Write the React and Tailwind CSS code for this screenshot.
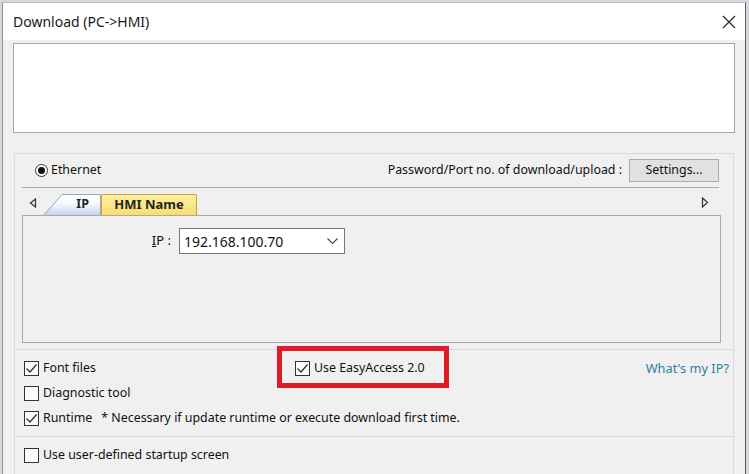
import React from "react";

const font = { fontFamily: '"Noto Sans", "Liberation Sans", sans-serif' };

function CheckBox({ checked }) {
  return (
    <span className="flex h-[15px] w-[15px] shrink-0 items-center justify-center border border-[#333333] bg-[#fbfbfb]">
      {checked && (
        <svg width="13" height="13" viewBox="0 0 13 13">
          <polyline points="1.5,6.5 5,10 11.5,2.5" fill="none" stroke="#333" strokeWidth="1.3" />
        </svg>
      )}
    </span>
  );
}

function Check({ checked, label, className = "" }) {
  return (
    <div className={"flex items-center gap-[4px] " + className}>
      <CheckBox checked={checked} />
      <span className="text-[12.4px] leading-none text-[#111]">{label}</span>
    </div>
  );
}

export default function App() {
  return (
    <div className="h-[474px] w-[749px] overflow-hidden bg-[#d6d8db] pl-[2px] pt-[2px]" style={font}>
      <div className="flex h-[480px] w-[744px] flex-col border-l border-r border-t border-l-[#8e939a] border-r-[#596069] border-t-[#b9bcc0] bg-[#f0f0f0]">
        {/* title bar */}
        <div className="flex h-[37px] shrink-0 items-center justify-between bg-white pl-[10px] pr-[9px]">
          <span className="text-[14px] text-[#1a1a1a]">Download (PC-&gt;HMI)</span>
          <svg width="14" height="14" viewBox="0 0 14 14">
            <path d="M1 1 L13 13 M13 1 L1 13" stroke="#222" strokeWidth="1.1" />
          </svg>
        </div>

        {/* message box */}
        <div className="mx-[10px] mt-[3px] h-[90px] shrink-0 border border-[#a8a8a8] bg-white" />

        <div className="mx-[11px] mt-[20px] flex flex-col border border-[#dadada] divide-y divide-[#dadada]">
          {/* connection group */}
          <div className="flex h-[196px] flex-col">
            <div className="flex h-[33px] items-center pl-[20px] pr-[14px]">
              <span className="flex h-[13px] w-[13px] items-center justify-center rounded-full border border-[#333] bg-white">
                <span className="h-[7px] w-[7px] rounded-full bg-[#111]" />
              </span>
              <span className="ml-[3px] text-[12.4px] text-[#111]">Ethernet</span>
              <span className="ml-auto text-[12.4px] text-[#111]">Password/Port no. of download/upload :</span>
              <button className="ml-[7px] flex h-[23px] w-[90px] items-center justify-center border border-[#adadad] bg-[#e1e1e1] text-[12.4px] text-[#111]">
                Settings...
              </button>
            </div>
            <div className="ml-[7px] mr-[14px] h-px bg-[#aaaaaa]" />

            {/* tab strip */}
            <div className="relative flex h-[27px] items-end pl-[14px] pr-[24px]">
              <svg width="8" height="10" viewBox="0 0 8 10" className="mb-[7px]">
                <path d="M6.5 1 L1.5 5 L6.5 9 Z" fill="none" stroke="#333" strokeWidth="1.2" />
              </svg>
              <div className="relative ml-[7px] flex h-[21px] w-[57px] items-center justify-end pr-[12px]">
                <svg className="absolute inset-0" width="57" height="21" viewBox="0 0 57 21">
                  <defs>
                    <linearGradient id="ipg" x1="0" y1="0" x2="0" y2="1">
                      <stop offset="0" stopColor="#ffffff" />
                      <stop offset="0.45" stopColor="#f4f8fd" />
                      <stop offset="1" stopColor="#c3d6ef" />
                    </linearGradient>
                  </defs>
                  <path d="M0 21 L18 0.5 L56.5 0.5 L56.5 21" fill="url(#ipg)" stroke="#9aa6b4" strokeWidth="1" />
                </svg>
                <span className="relative text-[12.5px] font-bold text-[#222]">IP</span>
              </div>
              <div className="flex h-[21px] w-[96px] items-center justify-center rounded-t-[2px] border border-b-0 border-[#c9a53c] bg-gradient-to-b from-[#fff0a2] to-[#fadc70] text-[13px] font-bold text-[#222]">
                HMI Name
              </div>
              <svg width="8" height="11" viewBox="0 0 8 11" className="mb-[7px] ml-auto">
                <path d="M1.5 1 L6.5 5.5 L1.5 10 Z" fill="none" stroke="#333" strokeWidth="1.2" />
              </svg>
            </div>

            {/* tab page */}
            <div className="ml-[7px] mr-[12px] h-[128px] border border-[#a9a9a9] pt-[12px]">
              <div className="flex items-center">
                <span className="w-[149px] pr-[1px] text-right text-[13px] text-[#111]">
                  <span className="underline">I</span>P :
                </span>
                <div className="ml-[7px] flex h-[26px] w-[166px] items-center border border-[#7a7a7a] bg-white pl-[4px] pr-[6px]">
                  <span className="text-[14px] text-[#111]">192.168.100.70</span>
                  <svg className="ml-auto" width="11" height="7" viewBox="0 0 11 7">
                    <polyline points="0.5,0.5 5.5,5.5 10.5,0.5" fill="none" stroke="#444" strokeWidth="1.1" />
                  </svg>
                </div>
              </div>
            </div>
          </div>

          {/* options group */}
          <div className="relative flex h-[87px] flex-col pl-[9px] pr-[4px] pt-[6px]">
            <div className="flex h-[25px] items-center">
              <div className="w-[271px]">
                <Check checked label="Font files" />
              </div>
              <Check checked label="Use EasyAccess 2.0" />
              <span className="ml-auto text-[12.8px] text-[#2f7ea6]">What's my IP?</span>
            </div>
            <div className="flex h-[25px] items-center">
              <Check label="Diagnostic tool" />
            </div>
            <div className="flex h-[25px] items-center">
              <Check checked label="Runtime" />
              <span className="ml-[9px] text-[12.4px] leading-none text-[#111]">
                * Necessary if update runtime or execute download first time.
              </span>
            </div>
            <div className="pointer-events-none absolute left-[262px] top-[-4px] h-[42px] w-[172px] border-[5px] border-[#e01b28]" />
          </div>

          {/* startup group */}
          <div className="flex h-[60px] flex-col pl-[9px] pt-[6px]">
            <div className="flex h-[25px] items-center">
              <Check label="Use user-defined startup screen" />
            </div>
          </div>
        </div>
      </div>
    </div>
  );
}
